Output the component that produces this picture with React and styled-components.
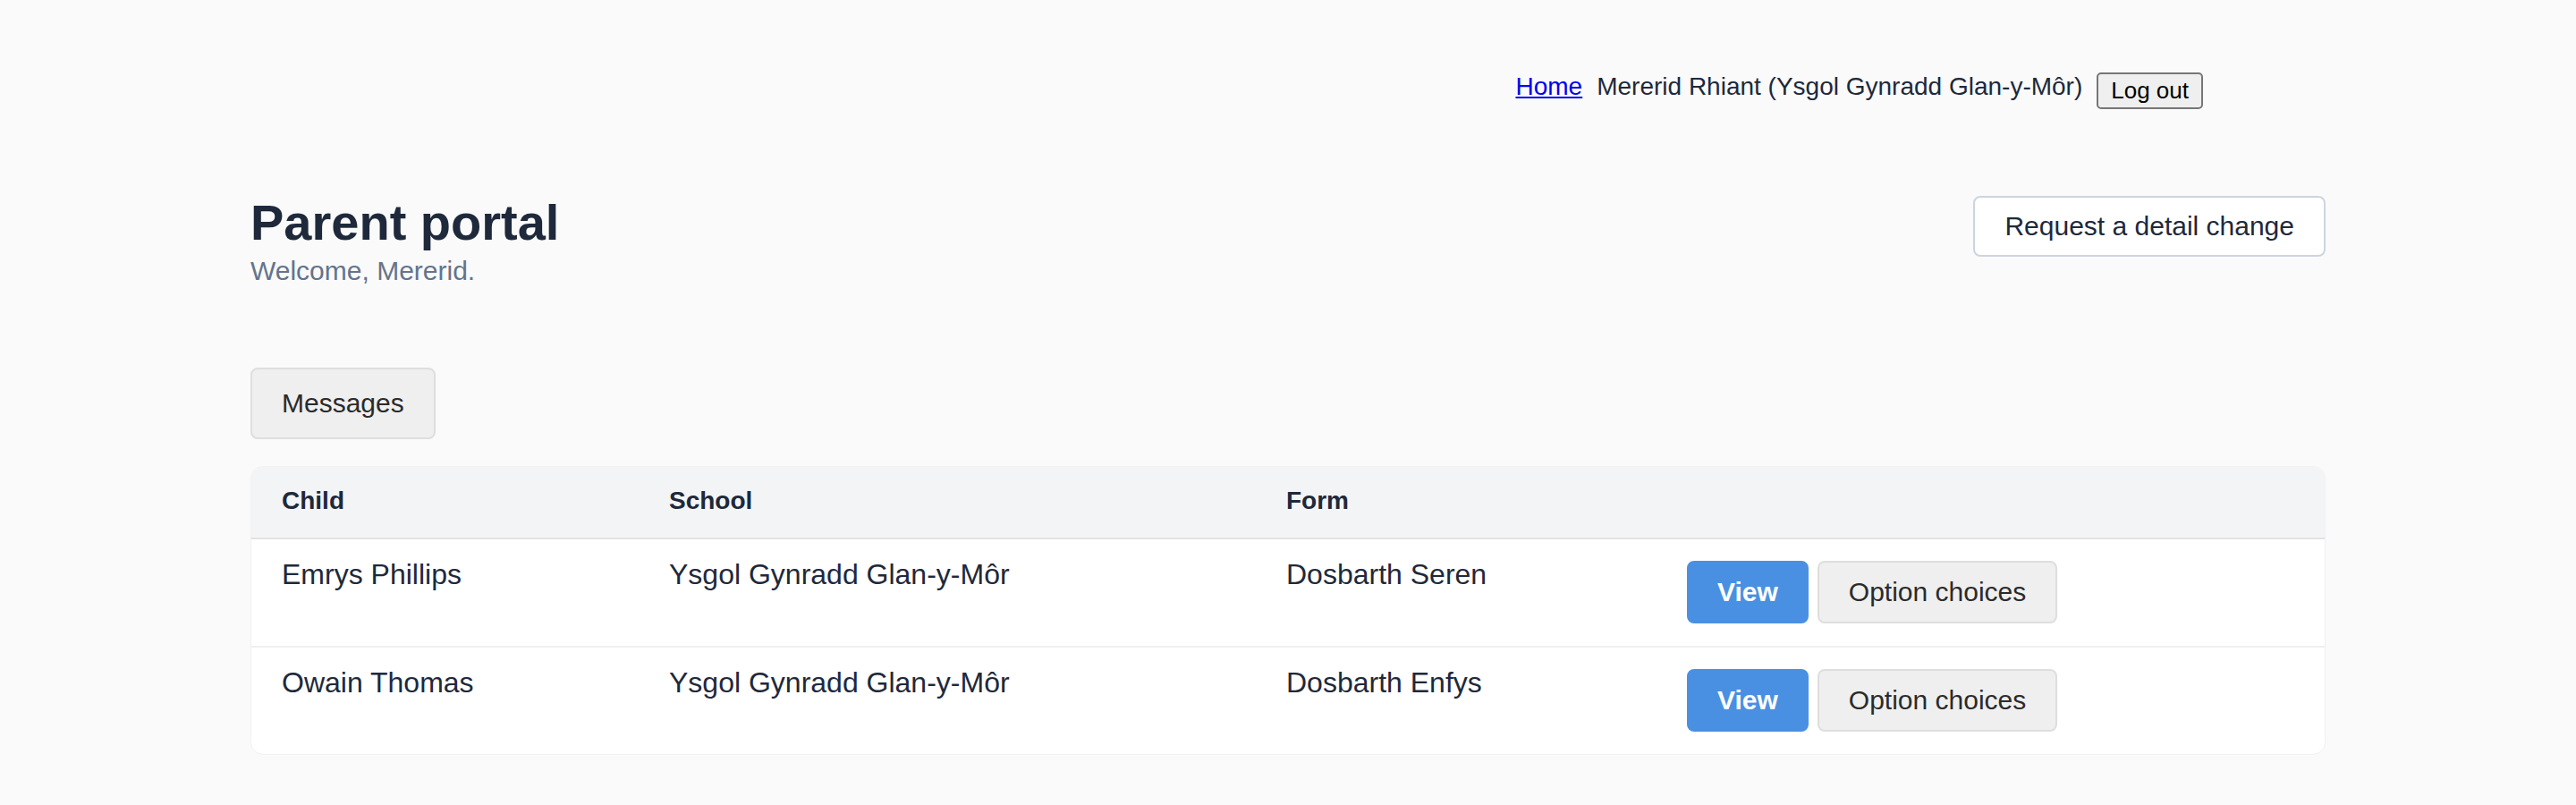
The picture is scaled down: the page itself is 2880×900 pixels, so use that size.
import React from 'react';
import styled, { createGlobalStyle } from 'styled-components';

const GlobalStyle = createGlobalStyle`
  html, body {
    margin: 0;
    padding: 0;
    background: #fafafa;
    font-family: "Liberation Sans", Arial, sans-serif;
    color: #1e293b;
  }
`;

const children = [
  { name: 'Emrys Phillips', school: 'Ysgol Gynradd Glan-y-Môr', form: 'Dosbarth Seren' },
  { name: 'Owain Thomas', school: 'Ysgol Gynradd Glan-y-Môr', form: 'Dosbarth Enfys' },
];

function App() {
  return (
    <Styled.Page>
      <GlobalStyle />
      <Styled.TopNav>
        <Styled.NavLink href="#">Home</Styled.NavLink>
        <Styled.NavText>Mererid Rhiant (Ysgol Gynradd Glan-y-Môr)</Styled.NavText>
        <Styled.LogoutButton type="button">Log out</Styled.LogoutButton>
      </Styled.TopNav>

      <Styled.Main>
        <Styled.PageHeader>
          <div>
            <Styled.Title>Parent portal</Styled.Title>
            <Styled.Subtitle>Welcome, Mererid.</Styled.Subtitle>
          </div>
          <Styled.OutlineButton type="button">Request a detail change</Styled.OutlineButton>
        </Styled.PageHeader>

        <Styled.Toolbar>
          <Styled.GreyButton type="button" $tall>Messages</Styled.GreyButton>
        </Styled.Toolbar>

        <Styled.Card>
          <Styled.HeadRow>
            <Styled.HeadCell>Child</Styled.HeadCell>
            <Styled.HeadCell>School</Styled.HeadCell>
            <Styled.HeadCell>Form</Styled.HeadCell>
            <Styled.HeadCell />
          </Styled.HeadRow>
          {children.map((c, i) => (
            <Styled.Row key={c.name} $last={i === children.length - 1}>
              <Styled.Cell>{c.name}</Styled.Cell>
              <Styled.Cell>{c.school}</Styled.Cell>
              <Styled.Cell>{c.form}</Styled.Cell>
              <Styled.Actions>
                <Styled.PrimaryButton type="button">View</Styled.PrimaryButton>
                <Styled.GreyButton type="button">Option choices</Styled.GreyButton>
              </Styled.Actions>
            </Styled.Row>
          ))}
        </Styled.Card>
      </Styled.Main>
    </Styled.Page>
  );
}

const columns = '433px 690px 448px 1fr';

const Styled = {
  Page: styled.div`
    min-height: 900px;
  `,

  TopNav: styled.nav`
    display: flex;
    justify-content: flex-end;
    gap: 16px;
    padding: 81px 417px 0 0;
    font-size: 28px;
  `,

  NavLink: styled.a`
    color: #0000ee;
    text-decoration: underline;
  `,

  NavText: styled.span`
    color: #1e293b;
  `,

  LogoutButton: styled.button`
    height: 41px;
    padding: 0 14px;
    font-family: "Liberation Sans", Arial, sans-serif;
    font-size: 26px;
    color: #000;
    background: #efefef;
    border: 2px solid #767676;
    border-radius: 5px;
  `,

  Main: styled.main`
    width: 2320px;
    margin: 0 auto;
    padding-top: 97px;
  `,

  PageHeader: styled.div`
    display: flex;
    justify-content: space-between;
    align-items: flex-start;
  `,

  Title: styled.h1`
    margin: 0;
    font-size: 56px;
    line-height: 60px;
    font-weight: 700;
    color: #1e293b;
  `,

  Subtitle: styled.p`
    margin: 7px 0 0;
    font-size: 30px;
    line-height: 34px;
    color: #64748b;
  `,

  OutlineButton: styled.button`
    height: 68px;
    padding: 0 33px;
    font-family: inherit;
    font-size: 30px;
    color: #1e293b;
    background: #fff;
    border: 2px solid #cbd5e1;
    border-radius: 8px;
  `,

  Toolbar: styled.div`
    display: flex;
    margin-top: 91px;
  `,

  GreyButton: styled.button`
    height: ${(p) => (p.$tall ? '80px' : '70px')};
    padding: 0 33px;
    font-family: inherit;
    font-size: 30px;
    color: #2b2b2b;
    background: #efefef;
    border: 2px solid #dedede;
    border-radius: 8px;
  `,

  PrimaryButton: styled.button`
    height: 70px;
    padding: 0 32px;
    font-family: inherit;
    font-size: 30px;
    font-weight: 700;
    color: #fff;
    background: #4a90e2;
    border: 2px solid #4a90e2;
    border-radius: 8px;
  `,

  Card: styled.div`
    margin-top: 30px;
    background: #fff;
    border: 1px solid #f1f1f1;
    border-radius: 14px;
    overflow: hidden;
  `,

  HeadRow: styled.div`
    display: grid;
    grid-template-columns: ${columns};
    background: #f3f4f6;
    border-bottom: 2px solid #e2e2e2;
  `,

  HeadCell: styled.div`
    padding: 22px 34px 25px;
    font-size: 28px;
    line-height: 32px;
    font-weight: 700;
    color: #1e293b;
  `,

  Row: styled.div`
    display: grid;
    grid-template-columns: ${columns};
    align-items: start;
    border-bottom: ${(p) => (p.$last ? 'none' : '2px solid #f0f0f0')};
  `,

  Cell: styled.div`
    padding: 23px 34px 0;
    font-size: 32px;
    line-height: 32px;
    color: #1e293b;
  `,

  Actions: styled.div`
    display: flex;
    gap: 10px;
    padding: 24px 34px 25px;
  `,
};

export default App;
